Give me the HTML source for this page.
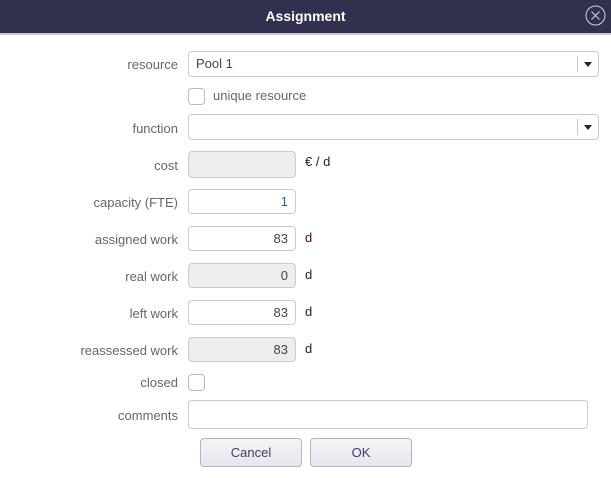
<!DOCTYPE html>
<html><head><meta charset="utf-8"><style>
body{margin:0;width:611px;height:478px;background:#fff;font-family:"Liberation Sans","DejaVu Sans",sans-serif;font-size:13px;position:relative;overflow:hidden}
.hdr{position:absolute;left:0;top:0;width:611px;height:33px;background:#31304f;border-bottom:2px solid #c9c9d3;color:#fff;font-weight:bold;text-align:center;line-height:33px;font-size:14px}
.x{position:absolute;right:5px;top:5px;width:21px;height:21px}
.l{position:absolute;right:433px;color:#666;text-align:right;white-space:nowrap}
.i{position:absolute;left:188px;height:24px;border:1px solid #ccc;border-radius:4px;box-sizing:border-box;background:#fff;color:#444;line-height:24px;padding:0 7px;text-align:right}
.g{background:#ededed}
.n{width:108px}
.d{position:absolute;left:305px;color:#222}
.cb{position:absolute;left:188px;width:17px;height:17px;border:1px solid #bbb;border-radius:4px;box-sizing:border-box}
.sel{width:411px;text-align:left;height:26px;line-height:24px}
.sel:after{content:"";position:absolute;right:0;top:4px;width:20px;height:16px;border-left:1px solid #ccc}
.sel b{position:absolute;right:6px;top:10px;border-left:4px solid transparent;border-right:4px solid transparent;border-top:5px solid #222}
.btn{position:absolute;top:438px;width:102px;height:29px;border:1px solid #b4b4c0;border-radius:4px;box-sizing:border-box;background:linear-gradient(#f4f4f8,#e6e6ee);color:#3c3c64;text-align:center;line-height:27px}
</style></head><body>
<div class="hdr">Assignment<svg class="x" viewBox="0 0 21 21"><circle cx="10.5" cy="10.5" r="9.5" fill="none" stroke="#d0d0da" stroke-width="1"/><path d="M6.5 6.5L14.5 14.5M14.5 6.5L6.5 14.5" stroke="#d0d0da" stroke-width="1.1"/></svg></div>
<div class="l" style="top:57px">resource</div><div class="i sel" style="top:51px">Pool 1<b></b></div>
<div class="cb" style="top:88px"></div><div style="position:absolute;left:213px;top:88px;color:#666">unique resource</div>
<div class="l" style="top:121px">function</div><div class="i sel" style="top:114px"><b></b></div>
<div class="l" style="top:158px">cost</div><div class="i g n" style="top:151px;height:27px"></div><div class="d" style="top:154px">€ / d</div>
<div class="l" style="top:195px">capacity (FTE)</div><div class="i n" style="top:189px;height:25px;color:#2a5a9a">1</div>
<div class="l" style="top:232px">assigned work</div><div class="i n" style="top:226px;height:25px">83</div><div class="d" style="top:230px;color:#600">d</div>
<div class="l" style="top:269px">real work</div><div class="i g n" style="top:263px;height:25px">0</div><div class="d" style="top:267px">d</div>
<div class="l" style="top:306px">left work</div><div class="i n" style="top:300px;height:25px">83</div><div class="d" style="top:304px">d</div>
<div class="l" style="top:343px">reassessed work</div><div class="i g n" style="top:337px;height:25px">83</div><div class="d" style="top:341px">d</div>
<div class="l" style="top:375px">closed</div><div class="cb" style="top:374px"></div>
<div class="l" style="top:408px">comments</div><div class="i" style="top:400px;width:400px;height:29px"></div>
<div class="btn" style="left:200px">Cancel</div><div class="btn" style="left:310px">OK</div>
</body></html>
